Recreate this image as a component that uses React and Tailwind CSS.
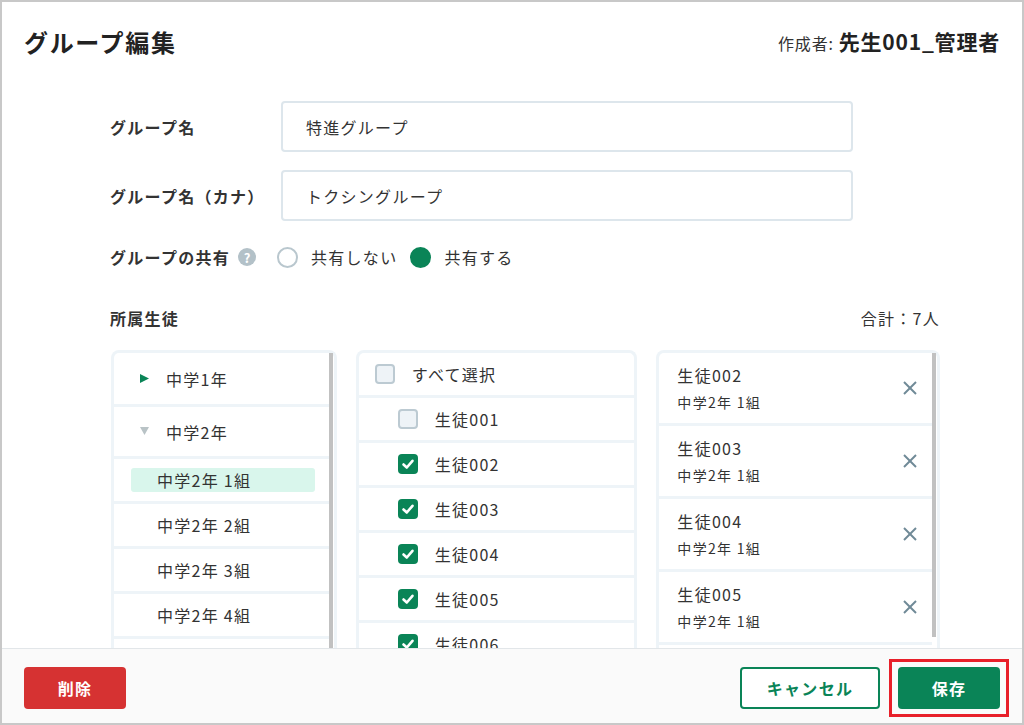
import React from "react";

const font = { fontFamily: '"Noto Sans CJK JP", "Noto Sans", sans-serif' };

function Check() {
  return (
    <span className="flex h-[20px] w-[20px] shrink-0 items-center justify-center rounded-[4px] bg-[#0a8457]">
      <svg width="14" height="14" viewBox="0 0 14 14" fill="none">
        <polyline points="2.5,7.5 5.8,10.5 11.5,3.8" stroke="#fff" strokeWidth="2.6" strokeLinecap="round" strokeLinejoin="round" />
      </svg>
    </span>
  );
}

function Box() {
  return <span className="h-[20px] w-[20px] shrink-0 rounded-[4px] border-2 border-[#bccad2] bg-[#eef3f7]" />;
}

function XIcon() {
  return (
    <svg width="16" height="16" viewBox="0 0 16 16" fill="none">
      <line x1="2" y1="2" x2="14" y2="14" stroke="#6f8a97" strokeWidth="2" />
      <line x1="14" y1="2" x2="2" y2="14" stroke="#6f8a97" strokeWidth="2" />
    </svg>
  );
}

export default function App() {
  const classes = ["中学2年 2組", "中学2年 3組", "中学2年 4組", "中学2年 5組"];
  const students = [
    { n: "生徒001", c: false },
    { n: "生徒002", c: true },
    { n: "生徒003", c: true },
    { n: "生徒004", c: true },
    { n: "生徒005", c: true },
    { n: "生徒006", c: true },
  ];
  const selected = ["生徒002", "生徒003", "生徒004", "生徒005", "生徒006"];

  return (
    <div style={font} className="flex h-[725px] w-[1024px] flex-col overflow-hidden border-2 border-[#c8c8c8] bg-white tracking-[0.08em] text-[#333]">
      <div className="min-h-0 flex-1 overflow-hidden">
        {/* header */}
        <div className="flex items-center justify-between px-[22px] pt-[24px]">
          <h1 className="text-[24px] font-bold leading-[30px] tracking-[0.07em] text-[#222]">グループ編集</h1>
          <div className="flex items-baseline leading-[30px] tracking-[0.05em]">
            <span className="text-[16px] text-[#333]">作成者:</span>
            <span className="ml-[5px] text-[21px] font-bold text-[#222]">先生001_管理者</span>
          </div>
        </div>

        {/* form */}
        <div className="pl-[108px] pr-[82px]">
          <div className="mt-[43px] flex items-center">
            <div className="w-[171px] text-[16px] font-bold">グループ名</div>
            <div className="flex h-[51px] w-[572px] items-center rounded-[4px] border-2 border-[#dde6ec] pl-[23px] text-[16px]">特進グループ</div>
          </div>
          <div className="mt-[18px] flex items-center">
            <div className="w-[171px] text-[16px] font-bold">グループ名（カナ）</div>
            <div className="flex h-[51px] w-[572px] items-center rounded-[4px] border-2 border-[#dde6ec] pl-[23px] text-[16px]">トクシングループ</div>
          </div>
          <div className="mt-[24px] flex h-[24px] items-center text-[16px]">
            <span className="font-bold">グループの共有</span>
            <span className="ml-[8px] flex h-[18px] w-[18px] items-center justify-center rounded-full bg-[#b3c1c8] text-[13px] font-bold leading-none tracking-normal text-white">?</span>
            <span className="ml-[21px] h-[21px] w-[21px] rounded-full border-2 border-[#b9c7ce]" />
            <span className="ml-[13px]">共有しない</span>
            <span className="ml-[13px] h-[21px] w-[21px] rounded-full bg-[#0a8457]" />
            <span className="ml-[13px]">共有する</span>
          </div>

          <div className="mt-[37px] flex h-[24px] items-center justify-between text-[16px]">
            <span className="font-bold">所属生徒</span>
            <span>合計：7人</span>
          </div>

          {/* columns */}
          <div className="ml-[1px] mt-[20px] flex gap-[19px]">
            {/* col1 */}
            <div className="flex h-[320px] w-[226px] rounded-t-[8px] border-[3px] border-b-0 border-[#eef4f8]">
              <div className="flex-1">
                <div className="flex h-[54px] items-center border-b-[3px] border-[#eef4f8] pl-[26px]">
                  <svg width="9" height="9" viewBox="0 0 9 9"><polygon points="0,0 9,4.5 0,9" fill="#0a8457" /></svg>
                  <span className="ml-[17px] text-[16px]">中学1年</span>
                </div>
                <div className="flex h-[52px] items-center border-b-[3px] border-[#eef4f8] pl-[26px]">
                  <svg width="9" height="9" viewBox="0 0 9 9"><polygon points="0,0 9,0 4.5,8" fill="#b9c3c6" /></svg>
                  <span className="ml-[17px] text-[16px]">中学2年</span>
                </div>
                <div className="flex h-[45px] items-center border-b-[3px] border-[#eef4f8] pl-[17px]">
                  <div className="flex h-[24px] w-[184px] items-center rounded-[3px] bg-[#d9f6ec] pl-[26px] text-[16px]">中学2年 1組</div>
                </div>
                {classes.map((c) => (
                  <div key={c} className="flex h-[45px] items-center border-b-[3px] border-[#eef4f8] pl-[43px] text-[16px]">{c}</div>
                ))}
              </div>
              <div className="mr-[1px] w-[4px] bg-[#c1c1c1]" />
            </div>

            {/* col2 */}
            <div className="h-[320px] w-[282px] rounded-t-[8px] border-[3px] border-b-0 border-[#eef4f8]">
              <div className="flex h-[45px] items-center border-b-[3px] border-[#eef4f8] pl-[16px]">
                <Box />
                <span className="ml-[17px] text-[16px]">すべて選択</span>
              </div>
              {students.map((s) => (
                <div key={s.n} className="flex h-[45px] items-center border-b-[3px] border-[#eef4f8] pl-[39px]">
                  {s.c ? <Check /> : <Box />}
                  <span className="ml-[17px] text-[16px]">{s.n}</span>
                </div>
              ))}
            </div>

            {/* col3 */}
            <div className="flex h-[320px] w-[284px] rounded-t-[8px] border-[3px] border-b-0 border-[#eef4f8]">
              <div className="flex-1">
                {selected.map((s) => (
                  <div key={s} className="flex h-[73px] items-center justify-between border-b-[3px] border-[#eef4f8] pl-[18px] pr-[14px]">
                    <div className="-mt-[2px] flex flex-col">
                      <span className="text-[16px] leading-[24px]">{s}</span>
                      <span className="mt-[5px] text-[14px] leading-[20px]">中学2年 1組</span>
                    </div>
                    <XIcon />
                  </div>
                ))}
              </div>
              <div className="mr-[1px] h-[284px] w-[4px] bg-[#c1c1c1]" />
            </div>
          </div>
        </div>
      </div>

      {/* footer */}
      <div className="flex h-[75px] shrink-0 items-start justify-between border-t border-[#e2e6e9] bg-[#fafafa] px-[22px] pt-[18px]">
        <button className="h-[42px] w-[102px] rounded-[4px] bg-[#d63232] text-[16px] font-bold text-white">削除</button>
        <div className="flex items-center gap-[18px]">
          <button className="h-[42px] w-[140px] rounded-[4px] border-2 border-[#0a8457] bg-white text-[16px] font-bold text-[#0a8457]">キャンセル</button>
          <div className="relative">
            <button className="h-[42px] w-[102px] rounded-[4px] bg-[#0a8457] text-[16px] font-bold text-white">保存</button>
            <div className="pointer-events-none absolute -bottom-[8px] -left-[9px] -right-[9px] -top-[8px] border-[3px] border-[#e8202a]" />
          </div>
        </div>
      </div>
    </div>
  );
}
